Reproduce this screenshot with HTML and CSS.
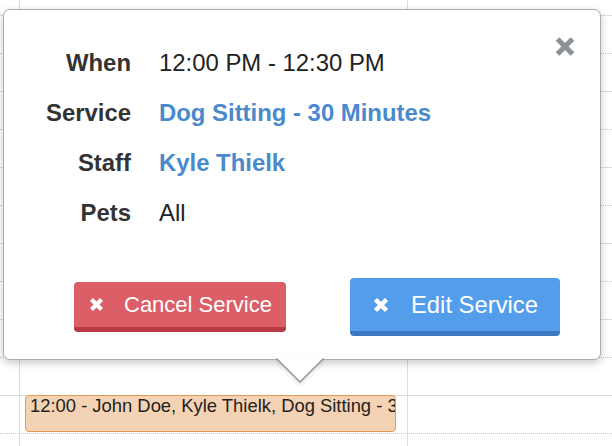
FILE: index.html
```html
<!DOCTYPE html>
<html>
<head>
<meta charset="utf-8">
<link rel="stylesheet" href="styles.css">
</head>
<body>
<div class="calendar">
  <div class="row dotted"><div class="gutter"></div><div class="day"></div><div class="day"></div></div>
  <div class="row"><div class="gutter"></div><div class="day"></div><div class="day"></div></div>
  <div class="row dotted"><div class="gutter"></div><div class="day"></div><div class="day"></div></div>
  <div class="row"><div class="gutter"></div><div class="day"></div><div class="day"></div></div>
  <div class="row dotted"><div class="gutter"></div><div class="day"></div><div class="day"></div></div>
  <div class="row"><div class="gutter"></div><div class="day"></div><div class="day"></div></div>
  <div class="row dotted"><div class="gutter"></div><div class="day"></div><div class="day"></div></div>
  <div class="row"><div class="gutter"></div><div class="day"></div><div class="day"></div></div>
  <div class="row dotted"><div class="gutter"></div><div class="day"></div><div class="day"></div></div>
  <div class="row"><div class="gutter"></div><div class="day"></div><div class="day"></div></div>
  <div class="row dotted"><div class="gutter"></div><div class="day"></div><div class="day"></div></div>
  <div class="row"><div class="gutter"></div><div class="day"><div class="event">12:00 - John Doe, Kyle Thielk, Dog Sitting - 30 Minutes</div></div><div class="day"></div></div>
  <div class="row dotted last"><div class="gutter"></div><div class="day"></div><div class="day"></div></div>
</div>

<div class="popover">
  <button class="close" aria-label="Close">
    <svg width="22" height="21" viewBox="0 0 22 21"><path d="M3.5 3 L18.5 18 M18.5 3 L3.5 18" stroke="#8b929a" stroke-width="5.2" fill="none"/></svg>
  </button>
  <dl class="details">
    <dt>When</dt><dd>12:00 PM - 12:30 PM</dd>
    <dt>Service</dt><dd class="link">Dog Sitting - 30 Minutes</dd>
    <dt>Staff</dt><dd class="link">Kyle Thielk</dd>
    <dt>Pets</dt><dd>All</dd>
  </dl>
  <div class="actions">
    <button class="btn btn-cancel">
      <svg class="btn-icon" width="15" height="15" viewBox="0 0 15 15"><path d="M2.5 2.5 L12.5 12.5 M12.5 2.5 L2.5 12.5" stroke="#fff" stroke-width="4.2" fill="none"/></svg>
      <span>Cancel Service</span>
    </button>
    <button class="btn btn-edit">
      <svg class="btn-icon" width="16" height="16" viewBox="0 0 16 16"><path d="M2.5 2.5 L13.5 13.5 M13.5 2.5 L2.5 13.5" stroke="#fff" stroke-width="4.5" fill="none"/></svg>
      <span>Edit Service</span>
    </button>
  </div>
  <svg class="arrow" width="48" height="26" viewBox="0 0 48 26"><polygon points="0,0 24,24 48,0" fill="#fff"/><polyline points="0.5,0.5 24,24 47.5,0.5" fill="none" stroke="#8f8f8f" stroke-width="1.3"/></svg>
</div>
</body>
</html>
```
FILE: styles.css
```css
* { box-sizing: border-box; }

html, body {
  margin: 0;
  padding: 0;
  width: 612px;
  height: 446px;
  overflow: hidden;
  background: #fff;
  font-family: "Liberation Sans", Arial, Helvetica, sans-serif;
}

.calendar {
  margin-top: -23px;
}

.row {
  display: grid;
  grid-template-columns: 19px 388px 1fr;
  height: 38px;
  border-top: 1px solid #dcdcdc;
}

.row.dotted {
  border-top: 1px dotted #c8c8c8;
}

.row.last {
  height: 13px;
}

.day {
  border-left: 1px solid #dcdcdc;
}

.event {
  margin: -1px 0 0 5px;
  width: 371px;
  height: 37px;
  padding: 0 4px;
  background: #f4d3b4;
  border: 1px solid #e49a55;
  border-radius: 4px;
  font-size: 18.4px;
  line-height: 20px;
  color: #222;
  white-space: nowrap;
  overflow: hidden;
}

.popover {
  position: absolute;
  left: 3px;
  top: 9px;
  width: 598px;
  height: 351px;
  background: #fff;
  border: 1px solid #ababab;
  border-radius: 7px;
  box-shadow: 0 3px 9px rgba(0, 0, 0, 0.22);
  padding-top: 28px;
}

.close {
  position: absolute;
  top: 26px;
  right: 24px;
  width: 22px;
  height: 21px;
  padding: 0;
  border: 0;
  background: none;
  display: block;
}

.close svg { display: block; }

.details {
  margin: 0;
  display: grid;
  grid-template-columns: 127px 1fr;
  column-gap: 28px;
  font-size: 23.9px;
  line-height: 50px;
}

.details dt {
  text-align: right;
  font-weight: bold;
  color: #333;
}

.details dd {
  margin: 0;
  color: #222;
}

.details dd.link {
  color: #4a89cc;
  font-weight: bold;
}

.actions {
  margin-top: 40px;
  padding-left: 70px;
  display: flex;
  align-items: center;
  gap: 64px;
  height: 58px;
}

.btn {
  display: flex;
  align-items: center;
  border: 0;
  border-radius: 4px;
  color: #fff;
  font-family: "Liberation Sans", Arial, Helvetica, sans-serif;
  margin: 0;
  text-align: left;
}

.btn-icon { display: block; flex: none; }

.btn-cancel {
  width: 212px;
  height: 50px;
  padding: 0 0 0 15px;
  gap: 20px;
  font-size: 22px;
  background: #dc5e66;
  border-bottom: 5px solid #b73a44;
}

.btn-edit {
  width: 210px;
  height: 58px;
  padding: 0 0 0 23px;
  gap: 22px;
  font-size: 23.8px;
  background: #539dea;
  border-bottom: 5px solid #3b78c2;
}

.arrow {
  position: absolute;
  left: 272px;
  top: calc(100% - 1px);
  display: block;
  filter: drop-shadow(0 2px 2px rgba(0, 0, 0, 0.12));
}
```
